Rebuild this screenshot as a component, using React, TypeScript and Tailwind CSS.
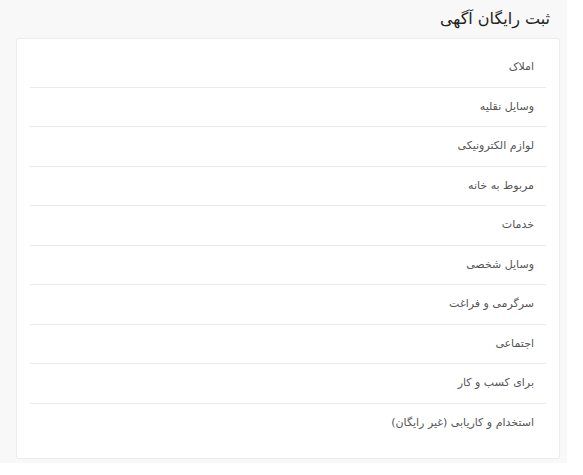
const items = [
  "املاک",
  "وسایل نقلیه",
  "لوازم الکترونیکی",
  "مربوط به خانه",
  "خدمات",
  "وسایل شخصی",
  "سرگرمی و فراغت",
  "اجتماعی",
  "برای کسب و کار",
  "استخدام و کاریابی (غیر رایگان)",
];

export default function App() {
  return (
    <div
      dir="rtl"
      className="h-[463px] w-[567px] bg-[#f8f8f8] pl-4 pr-[7px]"
      style={{ fontFamily: '"DejaVu Sans", "Noto Sans", sans-serif' }}
    >
      <h1 className="flex h-[38px] items-center pr-[10px] text-[16px] font-normal text-[#222]">
        ثبت رایگان آگهی
      </h1>
      <div className="h-[421px] rounded-[3px] border border-[#ececec] bg-white px-[13px] pt-[9px]">
        {items.map((t, i) => (
          <div
            key={t}
            className={
              "flex h-[39.5px] items-center pr-[12px] text-[11px] text-[#555] " +
              (i < items.length - 1 ? "border-b border-[#eaeaea]" : "")
            }
          >
            {t}
          </div>
        ))}
      </div>
    </div>
  );
}
